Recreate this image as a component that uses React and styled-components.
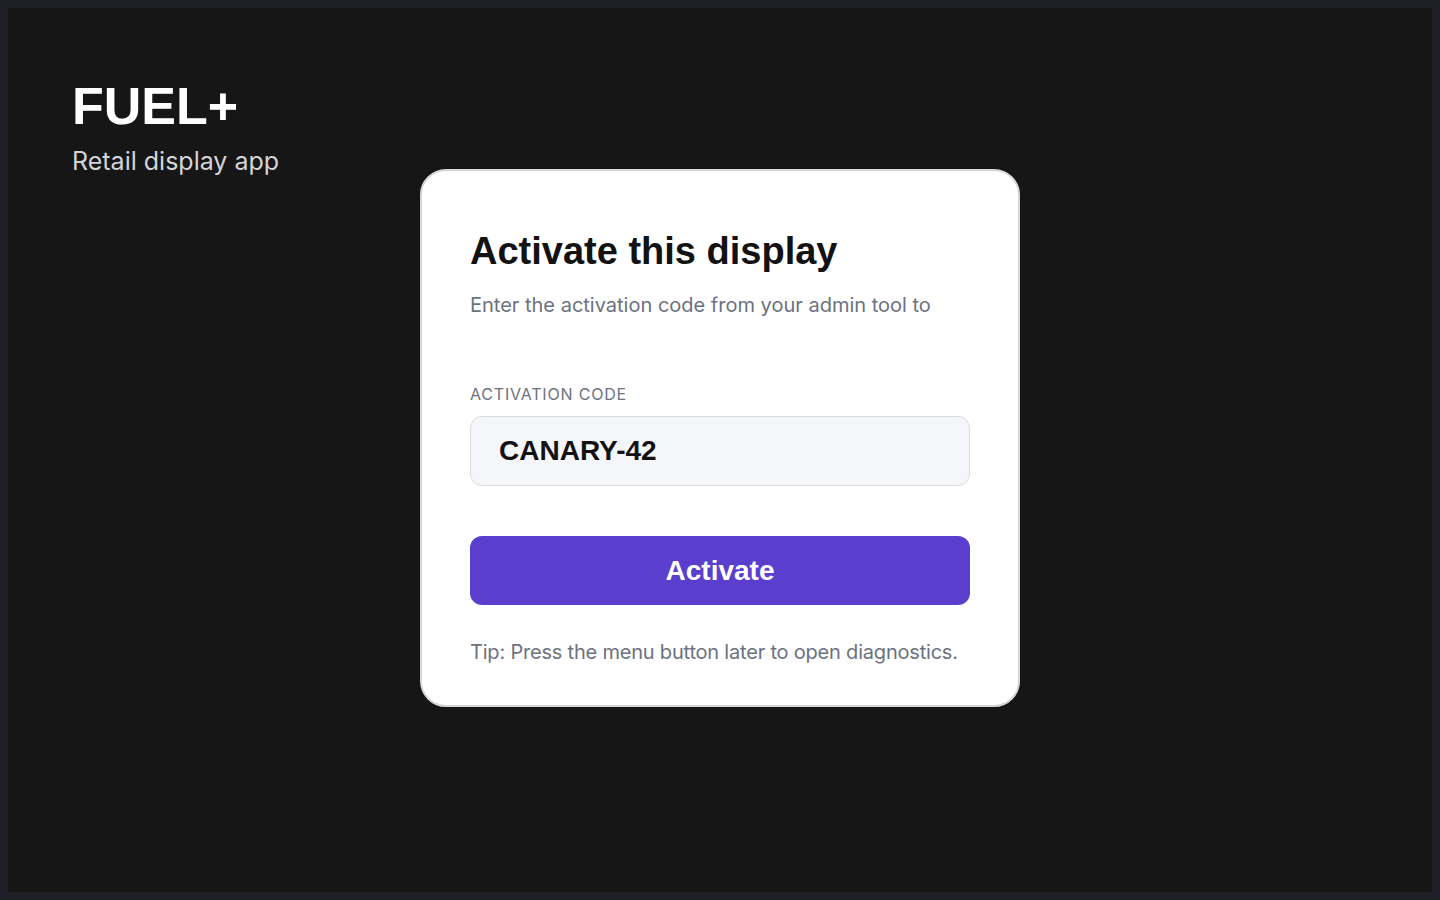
import React from "react";
import styled, { createGlobalStyle } from "styled-components";

const GlobalStyle = createGlobalStyle`
  html, body {
    background: #1f2027;
  }
  body {
    margin: 8px;
    font-family: "Inter", "Liberation Sans", sans-serif;
  }
  * {
    box-sizing: border-box;
  }
`;

const Screen = styled.div`
  height: 884px;
  background: #161616;
  padding: 70px 64px 64px 64px;
  display: flex;
  flex-direction: column;
`;

const Brand = styled.header`
  display: flex;
  flex-direction: column;
  gap: 11px;
`;

const BrandName = styled.h1`
  margin: 0;
  font-family: "Liberation Sans", Arial, sans-serif;
  font-weight: 700;
  font-size: 52px;
  line-height: 57px;
  color: #ffffff;
`;

const BrandTagline = styled.p`
  margin: 0;
  font-family: "Inter", sans-serif;
  font-size: 25px;
  line-height: 30px;
  color: #d4d4d8;
`;

const Card = styled.main`
  align-self: center;
  width: 600px;
  margin-top: -7px;
  background: #ffffff;
  border: 2px solid #d6d6db;
  border-radius: 26px;
  padding: 58px 48px 38px 48px;
  display: flex;
  flex-direction: column;
`;

const Title = styled.h2`
  margin: 0;
  font-family: "Liberation Sans", Arial, sans-serif;
  font-weight: 700;
  font-size: 38px;
  line-height: 44px;
  color: #121212;
`;

const Lead = styled.p`
  margin: 17px 0 0 0;
  font-family: "Inter", sans-serif;
  font-size: 20px;
  line-height: 30px;
  color: #6b7280;
`;

const Field = styled.label`
  margin-top: 62px;
  display: flex;
  flex-direction: column;
  gap: 10px;
`;

const FieldLabel = styled.span`
  font-family: "Inter", sans-serif;
  font-size: 16px;
  line-height: 24px;
  letter-spacing: 0.05em;
  color: #6b7280;
  text-transform: uppercase;
`;

const CodeInput = styled.input`
  width: 100%;
  height: 70px;
  padding: 0 28px;
  border: 1px solid #d9dbe1;
  border-radius: 12px;
  background: #f5f6f9;
  font-family: "Liberation Sans", Arial, sans-serif;
  font-weight: 700;
  font-size: 28px;
  color: #121212;
  outline: none;
`;

const PrimaryButton = styled.button`
  margin-top: 50px;
  width: 100%;
  height: 69px;
  border: none;
  border-radius: 12px;
  background: #5a3fcf;
  color: #ffffff;
  font-family: "Liberation Sans", Arial, sans-serif;
  font-weight: 700;
  font-size: 28px;
  cursor: pointer;
`;

const Hint = styled.p`
  margin: 32px 0 0 0;
  font-family: "Inter", sans-serif;
  font-size: 20px;
  line-height: 30px;
  letter-spacing: -0.01em;
  color: #6b7280;
`;

export default function App() {
  return (
    <>
      <GlobalStyle />
      <Screen>
        <Brand>
          <BrandName>FUEL+</BrandName>
          <BrandTagline>Retail display app</BrandTagline>
        </Brand>
        <Card>
          <Title>Activate this display</Title>
          <Lead>Enter the activation code from your admin tool to</Lead>
          <Field>
            <FieldLabel>Activation code</FieldLabel>
            <CodeInput defaultValue="CANARY-42" readOnly />
          </Field>
          <PrimaryButton type="button">Activate</PrimaryButton>
          <Hint>Tip: Press the menu button later to open diagnostics.</Hint>
        </Card>
      </Screen>
    </>
  );
}
